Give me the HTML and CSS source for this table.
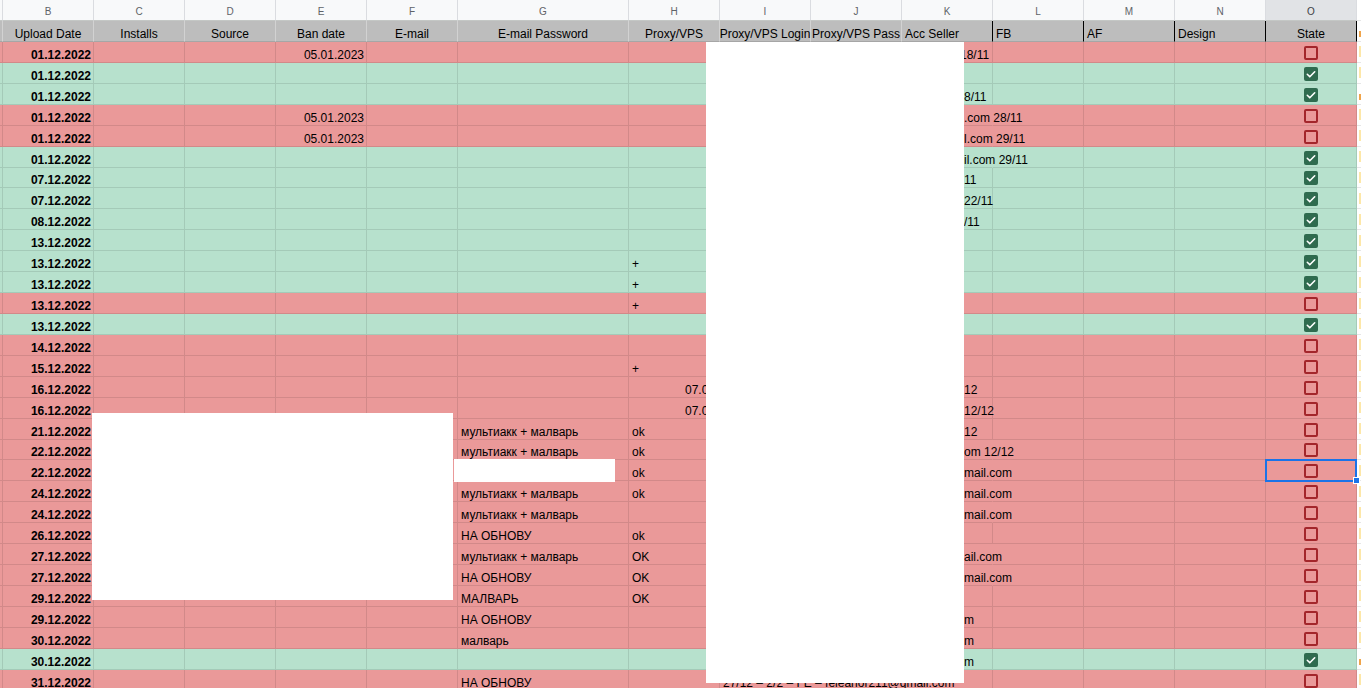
FILE: index.html
```html
<!DOCTYPE html>
<html>
<head>
<meta charset="utf-8">
<link rel="stylesheet" href="styles.css">
</head>
<body>
<div class="sheet">
  <div class="row letters">
    <div class="c a"></div><div class="c">B</div><div class="c">C</div><div class="c">D</div><div class="c">E</div><div class="c">F</div><div class="c">G</div><div class="c">H</div><div class="c">I</div><div class="c">J</div><div class="c">K</div><div class="c">L</div><div class="c">M</div><div class="c">N</div><div class="c selcol">O</div><div class="c p"></div>
  </div>
  <div class="row head">
    <div class="c a"></div><div class="c">Upload Date</div><div class="c">Installs</div><div class="c">Source</div><div class="c">Ban date</div><div class="c">E-mail</div><div class="c">E-mail Password</div><div class="c">Proxy/VPS</div><div class="c">Proxy/VPS Login</div><div class="c">Proxy/VPS Pass</div><div class="c hl bk">Acc Seller</div><div class="c hl bk">FB</div><div class="c hl bk">AF</div><div class="c hl bk">Design</div><div class="c bk">State</div><div class="c p"><span class="mark mk-o"></span></div>
  </div>

  <div class="row red"><div class="c a"></div><div class="c d">01.12.2022</div><div class="c"></div><div class="c"></div><div class="c r">05.01.2023</div><div class="c"></div><div class="c"></div><div class="c"></div><div class="c"></div><div class="c"></div><div class="c k k1">18/11</div><div class="c"></div><div class="c"></div><div class="c"></div><div class="c o"><span class="cb"></span></div><div class="c p"><span class="mark"></span></div></div>
  <div class="row green"><div class="c a"></div><div class="c d">01.12.2022</div><div class="c"></div><div class="c"></div><div class="c"></div><div class="c"></div><div class="c"></div><div class="c"></div><div class="c"></div><div class="c"></div><div class="c k"></div><div class="c"></div><div class="c"></div><div class="c"></div><div class="c o"><span class="cb on"><svg viewBox="0 0 14 14"><path d="M3.3 7.3l2.5 2.5 4.9-5"/></svg></span></div><div class="c p"><span class="mark"></span></div></div>
  <div class="row green"><div class="c a"></div><div class="c d">01.12.2022</div><div class="c"></div><div class="c"></div><div class="c"></div><div class="c"></div><div class="c"></div><div class="c"></div><div class="c"></div><div class="c"></div><div class="c k">8/11</div><div class="c"></div><div class="c"></div><div class="c"></div><div class="c o"><span class="cb on"><svg viewBox="0 0 14 14"><path d="M3.3 7.3l2.5 2.5 4.9-5"/></svg></span></div><div class="c p"><span class="mark mk-o"></span></div></div>
  <div class="row red"><div class="c a"></div><div class="c d">01.12.2022</div><div class="c"></div><div class="c"></div><div class="c r">05.01.2023</div><div class="c"></div><div class="c"></div><div class="c"></div><div class="c"></div><div class="c"></div><div class="c k ov">.com 28/11</div><div class="c"></div><div class="c"></div><div class="c"></div><div class="c o"><span class="cb"></span></div><div class="c p"><span class="mark"></span></div></div>
  <div class="row red"><div class="c a"></div><div class="c d">01.12.2022</div><div class="c"></div><div class="c"></div><div class="c r">05.01.2023</div><div class="c"></div><div class="c"></div><div class="c"></div><div class="c"></div><div class="c"></div><div class="c k ov">l.com 29/11</div><div class="c"></div><div class="c"></div><div class="c"></div><div class="c o"><span class="cb"></span></div><div class="c p"><span class="mark"></span></div></div>
  <div class="row green"><div class="c a"></div><div class="c d">01.12.2022</div><div class="c"></div><div class="c"></div><div class="c"></div><div class="c"></div><div class="c"></div><div class="c"></div><div class="c"></div><div class="c"></div><div class="c k ov">il.com 29/11</div><div class="c"></div><div class="c"></div><div class="c"></div><div class="c o"><span class="cb on"><svg viewBox="0 0 14 14"><path d="M3.3 7.3l2.5 2.5 4.9-5"/></svg></span></div><div class="c p"><span class="mark"></span></div></div>
  <div class="row green"><div class="c a"></div><div class="c d">07.12.2022</div><div class="c"></div><div class="c"></div><div class="c"></div><div class="c"></div><div class="c"></div><div class="c"></div><div class="c"></div><div class="c"></div><div class="c k">11</div><div class="c"></div><div class="c"></div><div class="c"></div><div class="c o"><span class="cb on"><svg viewBox="0 0 14 14"><path d="M3.3 7.3l2.5 2.5 4.9-5"/></svg></span></div><div class="c p"><span class="mark"></span></div></div>
  <div class="row green"><div class="c a"></div><div class="c d">07.12.2022</div><div class="c"></div><div class="c"></div><div class="c"></div><div class="c"></div><div class="c"></div><div class="c"></div><div class="c"></div><div class="c"></div><div class="c k">22/11</div><div class="c"></div><div class="c"></div><div class="c"></div><div class="c o"><span class="cb on"><svg viewBox="0 0 14 14"><path d="M3.3 7.3l2.5 2.5 4.9-5"/></svg></span></div><div class="c p"><span class="mark"></span></div></div>
  <div class="row green"><div class="c a"></div><div class="c d">08.12.2022</div><div class="c"></div><div class="c"></div><div class="c"></div><div class="c"></div><div class="c"></div><div class="c"></div><div class="c"></div><div class="c"></div><div class="c k">/11</div><div class="c"></div><div class="c"></div><div class="c"></div><div class="c o"><span class="cb on"><svg viewBox="0 0 14 14"><path d="M3.3 7.3l2.5 2.5 4.9-5"/></svg></span></div><div class="c p"><span class="mark"></span></div></div>
  <div class="row green"><div class="c a"></div><div class="c d">13.12.2022</div><div class="c"></div><div class="c"></div><div class="c"></div><div class="c"></div><div class="c"></div><div class="c"></div><div class="c"></div><div class="c"></div><div class="c k"></div><div class="c"></div><div class="c"></div><div class="c"></div><div class="c o"><span class="cb on"><svg viewBox="0 0 14 14"><path d="M3.3 7.3l2.5 2.5 4.9-5"/></svg></span></div><div class="c p"><span class="mark"></span></div></div>
  <div class="row green"><div class="c a"></div><div class="c d">13.12.2022</div><div class="c"></div><div class="c"></div><div class="c"></div><div class="c"></div><div class="c"></div><div class="c">+</div><div class="c"></div><div class="c"></div><div class="c k"></div><div class="c"></div><div class="c"></div><div class="c"></div><div class="c o"><span class="cb on"><svg viewBox="0 0 14 14"><path d="M3.3 7.3l2.5 2.5 4.9-5"/></svg></span></div><div class="c p"><span class="mark"></span></div></div>
  <div class="row green"><div class="c a"></div><div class="c d">13.12.2022</div><div class="c"></div><div class="c"></div><div class="c"></div><div class="c"></div><div class="c"></div><div class="c">+</div><div class="c"></div><div class="c"></div><div class="c k"></div><div class="c"></div><div class="c"></div><div class="c"></div><div class="c o"><span class="cb on"><svg viewBox="0 0 14 14"><path d="M3.3 7.3l2.5 2.5 4.9-5"/></svg></span></div><div class="c p"><span class="mark"></span></div></div>
  <div class="row red"><div class="c a"></div><div class="c d">13.12.2022</div><div class="c"></div><div class="c"></div><div class="c"></div><div class="c"></div><div class="c"></div><div class="c">+</div><div class="c"></div><div class="c"></div><div class="c k"></div><div class="c"></div><div class="c"></div><div class="c"></div><div class="c o"><span class="cb"></span></div><div class="c p"><span class="mark"></span></div></div>
  <div class="row green"><div class="c a"></div><div class="c d">13.12.2022</div><div class="c"></div><div class="c"></div><div class="c"></div><div class="c"></div><div class="c"></div><div class="c"></div><div class="c"></div><div class="c"></div><div class="c k"></div><div class="c"></div><div class="c"></div><div class="c"></div><div class="c o"><span class="cb on"><svg viewBox="0 0 14 14"><path d="M3.3 7.3l2.5 2.5 4.9-5"/></svg></span></div><div class="c p"><span class="mark"></span></div></div>
  <div class="row red"><div class="c a"></div><div class="c d">14.12.2022</div><div class="c"></div><div class="c"></div><div class="c"></div><div class="c"></div><div class="c"></div><div class="c"></div><div class="c"></div><div class="c"></div><div class="c k"></div><div class="c"></div><div class="c"></div><div class="c"></div><div class="c o"><span class="cb"></span></div><div class="c p"><span class="mark"></span></div></div>
  <div class="row red"><div class="c a"></div><div class="c d">15.12.2022</div><div class="c"></div><div class="c"></div><div class="c"></div><div class="c"></div><div class="c"></div><div class="c">+</div><div class="c"></div><div class="c"></div><div class="c k"></div><div class="c"></div><div class="c"></div><div class="c"></div><div class="c o"><span class="cb"></span></div><div class="c p"><span class="mark"></span></div></div>
  <div class="row red"><div class="c a"></div><div class="c d">16.12.2022</div><div class="c"></div><div class="c"></div><div class="c"></div><div class="c"></div><div class="c"></div><div class="c h7">07.01.2023</div><div class="c"></div><div class="c"></div><div class="c k">12</div><div class="c"></div><div class="c"></div><div class="c"></div><div class="c o"><span class="cb"></span></div><div class="c p"><span class="mark"></span></div></div>
  <div class="row red"><div class="c a"></div><div class="c d">16.12.2022</div><div class="c"></div><div class="c"></div><div class="c"></div><div class="c"></div><div class="c"></div><div class="c h7">07.01.2023</div><div class="c"></div><div class="c"></div><div class="c k">12/12</div><div class="c"></div><div class="c"></div><div class="c"></div><div class="c o"><span class="cb"></span></div><div class="c p"><span class="mark"></span></div></div>
  <div class="row red"><div class="c a"></div><div class="c d">21.12.2022</div><div class="c"></div><div class="c"></div><div class="c"></div><div class="c"></div><div class="c">мультиакк + малварь</div><div class="c">ok</div><div class="c"></div><div class="c"></div><div class="c k">12</div><div class="c"></div><div class="c"></div><div class="c"></div><div class="c o"><span class="cb"></span></div><div class="c p"><span class="mark"></span></div></div>
  <div class="row red"><div class="c a"></div><div class="c d">22.12.2022</div><div class="c"></div><div class="c"></div><div class="c"></div><div class="c"></div><div class="c">мультиакк + малварь</div><div class="c">ok</div><div class="c"></div><div class="c"></div><div class="c k ov">om 12/12</div><div class="c"></div><div class="c"></div><div class="c"></div><div class="c o"><span class="cb"></span></div><div class="c p"><span class="mark"></span></div></div>
  <div class="row red"><div class="c a"></div><div class="c d">22.12.2022</div><div class="c"></div><div class="c"></div><div class="c"></div><div class="c"></div><div class="c"></div><div class="c">ok</div><div class="c"></div><div class="c"></div><div class="c k ov">mail.com</div><div class="c"></div><div class="c"></div><div class="c"></div><div class="c o"><span class="cb"></span></div><div class="c p"><span class="mark"></span></div></div>
  <div class="row red"><div class="c a"></div><div class="c d">24.12.2022</div><div class="c"></div><div class="c"></div><div class="c"></div><div class="c"></div><div class="c">мультиакк + малварь</div><div class="c">ok</div><div class="c"></div><div class="c"></div><div class="c k ov">mail.com</div><div class="c"></div><div class="c"></div><div class="c"></div><div class="c o"><span class="cb"></span></div><div class="c p"><span class="mark"></span></div></div>
  <div class="row red"><div class="c a"></div><div class="c d">24.12.2022</div><div class="c"></div><div class="c"></div><div class="c"></div><div class="c"></div><div class="c">мультиакк + малварь</div><div class="c"></div><div class="c"></div><div class="c"></div><div class="c k ov">mail.com</div><div class="c"></div><div class="c"></div><div class="c"></div><div class="c o"><span class="cb"></span></div><div class="c p"><span class="mark"></span></div></div>
  <div class="row red"><div class="c a"></div><div class="c d">26.12.2022</div><div class="c"></div><div class="c"></div><div class="c"></div><div class="c"></div><div class="c">НА ОБНОВУ</div><div class="c">ok</div><div class="c"></div><div class="c"></div><div class="c k"></div><div class="c"></div><div class="c"></div><div class="c"></div><div class="c o"><span class="cb"></span></div><div class="c p"><span class="mark"></span></div></div>
  <div class="row red"><div class="c a"></div><div class="c d">27.12.2022</div><div class="c"></div><div class="c"></div><div class="c"></div><div class="c"></div><div class="c">мультиакк + малварь</div><div class="c">OK</div><div class="c"></div><div class="c"></div><div class="c k ov">ail.com</div><div class="c"></div><div class="c"></div><div class="c"></div><div class="c o"><span class="cb"></span></div><div class="c p"><span class="mark"></span></div></div>
  <div class="row red"><div class="c a"></div><div class="c d">27.12.2022</div><div class="c"></div><div class="c"></div><div class="c"></div><div class="c"></div><div class="c">НА ОБНОВУ</div><div class="c">OK</div><div class="c"></div><div class="c"></div><div class="c k ov">mail.com</div><div class="c"></div><div class="c"></div><div class="c"></div><div class="c o"><span class="cb"></span></div><div class="c p"><span class="mark"></span></div></div>
  <div class="row red"><div class="c a"></div><div class="c d">29.12.2022</div><div class="c"></div><div class="c"></div><div class="c"></div><div class="c"></div><div class="c">МАЛВАРЬ</div><div class="c">OK</div><div class="c"></div><div class="c"></div><div class="c k"></div><div class="c"></div><div class="c"></div><div class="c"></div><div class="c o"><span class="cb"></span></div><div class="c p"><span class="mark"></span></div></div>
  <div class="row red"><div class="c a"></div><div class="c d">29.12.2022</div><div class="c"></div><div class="c"></div><div class="c"></div><div class="c"></div><div class="c">НА ОБНОВУ</div><div class="c"></div><div class="c"></div><div class="c"></div><div class="c k">m</div><div class="c"></div><div class="c"></div><div class="c"></div><div class="c o"><span class="cb"></span></div><div class="c p"><span class="mark"></span></div></div>
  <div class="row red"><div class="c a"></div><div class="c d">30.12.2022</div><div class="c"></div><div class="c"></div><div class="c"></div><div class="c"></div><div class="c">малварь</div><div class="c"></div><div class="c"></div><div class="c"></div><div class="c k">m</div><div class="c"></div><div class="c"></div><div class="c"></div><div class="c o"><span class="cb"></span></div><div class="c p"><span class="mark"></span></div></div>
  <div class="row green"><div class="c a"></div><div class="c d">30.12.2022</div><div class="c"></div><div class="c"></div><div class="c"></div><div class="c"></div><div class="c"></div><div class="c"></div><div class="c"></div><div class="c"></div><div class="c k">m</div><div class="c"></div><div class="c"></div><div class="c"></div><div class="c o"><span class="cb on"><svg viewBox="0 0 14 14"><path d="M3.3 7.3l2.5 2.5 4.9-5"/></svg></span></div><div class="c p"><span class="mark mk-o"></span></div></div>
  <div class="row red"><div class="c a"></div><div class="c d">31.12.2022</div><div class="c"></div><div class="c"></div><div class="c"></div><div class="c"></div><div class="c">НА ОБНОВУ</div><div class="c"></div><div class="c ov">27/12 – 2/2 – FE – feleanor211@gmail.com</div><div class="c ov"></div><div class="c k"></div><div class="c"></div><div class="c"></div><div class="c"></div><div class="c o"><span class="cb"></span></div><div class="c p"><span class="mark"></span></div></div>

  <div class="mask mask-mid"></div>
  <div class="mask mask-left"></div>
  <div class="mask mask-small"></div>
  <div class="selbox"></div>
  <div class="handle"></div>
</div>
</body>
</html>
```
FILE: styles.css
```css
* { box-sizing: border-box; }

html, body {
  margin: 0;
  padding: 0;
  background: #fff;
  overflow: hidden;
}

body {
  font-family: "Liberation Sans", Arial, sans-serif;
  font-size: 12px;
  color: #000;
}

.sheet {
  position: relative;
  width: 1361px;
  height: 688px;
  overflow: hidden;
}

.row {
  display: grid;
  grid-template-columns: 3px repeat(5, 91px) 171px repeat(8, 91px) 1fr;
  height: 20.93px;
}

.c {
  display: flex;
  align-items: flex-end;
  padding: 0 3px 0;
  line-height: 14px;
  white-space: pre;
  min-width: 0;
  border-right: 1px solid rgba(0, 0, 0, 0.1);
  border-bottom: 1px solid rgba(0, 0, 0, 0.1);
}

.c.a { padding: 0; }

.red { background: #ea9999; }
.green { background: #b7e1cd; }

/* column letters */
.letters { height: 21px; }
.letters .c {
  background: #f8f9fa;
  color: #5f6368;
  font-size: 10px;
  justify-content: center;
  align-items: center;
  padding: 3px 0 0;
  border-right-color: #dadce0;
  border-bottom-color: #c4c7c5;
}
.letters .c.selcol {
  background: #e1e3e6;
  color: #3c4043;
}

/* header row */
.head {
  height: 21px;
  background: #bdbdbd;
}
.head .c {
  justify-content: center;
  border-right-color: #d2d2d2;
  border-bottom-color: rgba(0, 0, 0, 0.12);
}
.head .c.hl { justify-content: flex-start; }
.head .c.bk { border-right-color: #000; }

.d {
  justify-content: flex-end;
  font-weight: bold;
  padding-right: 2px;
}
.r {
  justify-content: flex-end;
  padding-right: 2px;
}
.k { padding-left: 62px; }
.k1 { padding-left: 58px; }
.h7 { padding-left: 56px; }
.ov { border-right-color: transparent; }

.o {
  justify-content: center;
  align-items: center;
  padding: 2px 0 0;
}

.cb {
  display: block;
  width: 14px;
  height: 14px;
  border: 2px solid #a3262b;
  border-radius: 2px;
}
.cb.on {
  background: #2f6b4f;
  border-color: #2f6b4f;
  border-width: 0;
}
.cb svg {
  display: block;
  width: 14px;
  height: 14px;
  fill: none;
  stroke: #fff;
  stroke-width: 1.6;
  stroke-linecap: round;
  stroke-linejoin: round;
}

.c.p {
  background: #fff;
  border-right: 0;
  border-bottom-color: #e6e6e6;
  padding: 0 0 0 2px;
  align-items: center;
}
.mark {
  display: block;
  width: 2px;
  height: 11px;
  background: #fde7a8;
}
.mark.mk-o { background: #f0a44a; height: 6px; align-self: flex-end; margin-bottom: 4px; }

.mask {
  position: absolute;
  background: #fff;
}
.mask-mid { left: 706px; top: 42px; width: 258px; height: 641px; }
.mask-left { left: 92px; top: 413px; width: 361px; height: 187px; }
.mask-small { left: 454px; top: 459px; width: 161px; height: 23px; }

.selbox {
  position: absolute;
  left: 1265px;
  top: 459px;
  width: 92px;
  height: 23px;
  border: 2px solid #1a73e8;
}
.handle {
  position: absolute;
  left: 1353px;
  top: 477px;
  width: 7px;
  height: 7px;
  background: #1a73e8;
  border: 1px solid #fff;
}
```
